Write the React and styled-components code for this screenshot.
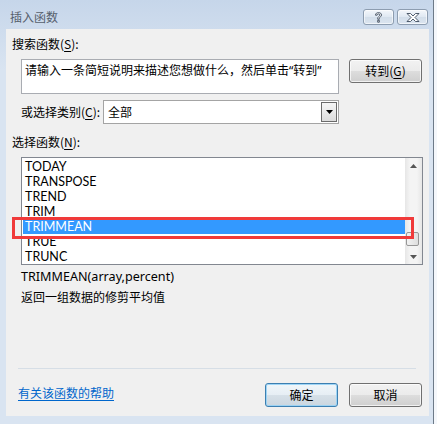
import React from "react";
import styled, { createGlobalStyle } from "styled-components";

const GlobalStyle = createGlobalStyle`
  html, body {
    margin: 0;
    padding: 0;
    background: #f4f7fb;
  }
  body {
    font-family: "Segoe UI", "Noto Sans", "Noto Sans CJK SC", sans-serif;
    font-size: 12px;
    color: #000;
  }
`;

const Frame = styled.div`
  width: 434px;
  height: 424px;
  border-right: 1px solid #6d7a88;
  background: linear-gradient(#c6d6ea, #d9e4f1 70px, #d9e4f1);
  display: flex;
  flex-direction: column;
  padding: 0 4px 8px 6px;
  box-sizing: border-box;
`;

const TitleBar = styled.div`
  height: 29px;
  display: flex;
  align-items: flex-start;
  justify-content: space-between;
`;

const Title = styled.div`
  margin: 9px 0 0 4px;
  line-height: 16px;
  color: #56606c;
  font-family: "Noto Sans CJK SC", sans-serif;
`;

const CaptionButtons = styled.div`
  display: flex;
  gap: 3px;
  margin-top: 9px;
  margin-right: 1px;
`;

const CaptionButton = styled.div`
  width: 29px;
  height: 14px;
  border: 1px solid #8d9db0;
  border-radius: 3px;
  background: linear-gradient(#f4f7fb, #dfe8f2 50%, #d3deea 51%, #dbe5f0);
  box-shadow: inset 0 0 0 1px rgba(255, 255, 255, 0.6);
  display: flex;
  align-items: center;
  justify-content: center;
`;

const Client = styled.div`
  flex: 1;
  background: #f0f0f0;
  display: flex;
  flex-direction: column;
  padding: 0 7px 9px 6px;
  font-family: "Noto Sans", "Noto Sans CJK SC", sans-serif;
`;

const Label = styled.div`
  line-height: 16px;
  margin-top: ${(p) => p.$top}px;
  white-space: nowrap;
  font-family: "Noto Sans CJK SC", sans-serif;

  u {
    text-decoration-thickness: 1px;
    text-underline-offset: 2px;
  }
`;

const Row = styled.div`
  display: flex;
  align-items: flex-start;
  margin-top: ${(p) => p.$top}px;
  margin-left: 9px;
  gap: ${(p) => p.$gap || 0}px;
`;

const SearchBox = styled.div`
  width: 318px;
  height: 35px;
  border: 1px solid #a9acb2;
  background: #fff;
  box-sizing: border-box;
  padding: 2px 0 0 3px;
  line-height: 16px;
  font-family: "Noto Sans CJK SC", sans-serif;
  white-space: nowrap;
`;

const Quote = styled.span`
  font-family: "Noto Sans", sans-serif;
`;

const PushButton = styled.div`
  width: 73px;
  height: 24px;
  box-sizing: border-box;
  border: 1px solid ${(p) => (p.$default ? "#3c7fb1" : "#707070")};
  border-radius: 3px;
  background: ${(p) =>
    p.$default
      ? "linear-gradient(#f0f6fa, #e6eef4 50%, #d6e0e8 51%, #cbd6df)"
      : "linear-gradient(#f2f2f2, #ebebeb 50%, #dddddd 51%, #cfcfcf)"};
  box-shadow: inset 0 0 0 1px
    ${(p) => (p.$default ? "rgba(150, 210, 245, 0.9)" : "rgba(255, 255, 255, 0.7)")};
  display: flex;
  align-items: center;
  justify-content: center;
  font-family: "Noto Sans CJK SC", sans-serif;
  line-height: 16px;
  margin-left: ${(p) => p.$left || 0}px;

  u {
    text-underline-offset: 2px;
  }
`;

const CategoryLabel = styled.div`
  width: 82px;
  line-height: 24px;
  font-family: "Noto Sans CJK SC", sans-serif;
  white-space: nowrap;

  u {
    text-underline-offset: 2px;
  }
`;

const Select = styled.div`
  width: 236px;
  height: 24px;
  box-sizing: border-box;
  border: 1px solid #a4a4a4;
  background: #fff;
  display: flex;
  align-items: stretch;
`;

const SelectValue = styled.div`
  flex: 1;
  padding-left: 4px;
  line-height: 22px;
  font-family: "Noto Sans CJK SC", sans-serif;
`;

const SelectArrow = styled.div`
  width: 16px;
  margin: 1px;
  box-sizing: border-box;
  border: 1px solid #6b6b6b;
  background: linear-gradient(#f6f6f6, #dcdcdc);
  display: flex;
  align-items: center;
  justify-content: center;
`;

const ListWrap = styled.div`
  position: relative;
  margin: 7px 0 0 9px;
  width: 402px;
  height: 108px;
`;

const ListBox = styled.div`
  width: 100%;
  height: 100%;
  box-sizing: border-box;
  border: 1px solid #828790;
  background: #fff;
  display: flex;
`;

const Items = styled.div`
  flex: 1;
  padding: 1px 0 0 1px;
  overflow: hidden;
`;

const Item = styled.div`
  height: 15px;
  line-height: 15px;
  padding-left: 2px;
  font-family: Lato, "Noto Sans", sans-serif;
  font-size: 12.5px;
  background: ${(p) => (p.$selected ? "#3399ff" : "transparent")};
  color: ${(p) => (p.$selected ? "#fff" : "#000")};
  white-space: nowrap;
`;

const ScrollBar = styled.div`
  width: 17px;
  background: linear-gradient(90deg, #e6e6e6, #f4f4f4 30%, #f4f4f4 70%, #e6e6e6);
  display: flex;
  flex-direction: column;
  align-items: center;
  justify-content: space-between;
  padding: 6px 0 5px;
  box-sizing: border-box;
`;

const Thumb = styled.div`
  width: 13px;
  height: 14px;
  margin-left: -2px;
  box-sizing: border-box;
  border: 1px solid #979797;
  border-radius: 2px;
  background: linear-gradient(90deg, #f2f2f2, #dedede);
  margin-top: auto;
  margin-bottom: 9px;
`;

const Highlight = styled.div`
  position: absolute;
  left: -9px;
  top: 60px;
  width: 402px;
  height: 22px;
  box-sizing: border-box;
  border: 3px solid #f03a3a;
  pointer-events: none;
`;

const Description = styled.div`
  margin: 2px 0 0 9px;
  line-height: 20px;

  p {
    margin: 0;
  }
  p:first-child {
    font-size: 12.6px;
  }
  p + p {
    font-family: "Noto Sans CJK SC", sans-serif;
  }
`;

const Separator = styled.div`
  margin: auto 6px 0 6px;
  height: 1px;
  background: #d6dee6;
`;

const Footer = styled.div`
  display: flex;
  align-items: center;
  margin-top: 14px;
  padding-left: 6px;
`;

const HelpLink = styled.a`
  color: #0066cc;
  text-decoration: underline;
  text-underline-offset: 2px;
  font-family: "Noto Sans CJK SC", sans-serif;
  line-height: 16px;
  margin-right: auto;
  margin-top: -4px;
  cursor: pointer;
`;

const functions = ["TODAY", "TRANSPOSE", "TREND", "TRIM", "TRIMMEAN", "TRUE", "TRUNC"];

const Tri = ({ up }) => (
  <svg width="7" height="4" viewBox="0 0 7 4">
    <polygon points={up ? "3.5,0 7,4 0,4" : "0,0 7,0 3.5,4"} fill="#555" />
  </svg>
);

export default function App() {
  return (
    <>
      <GlobalStyle />
      <Frame>
        <TitleBar>
          <Title>插入函数</Title>
          <CaptionButtons>
            <CaptionButton>
              <svg width="9" height="11" viewBox="0 0 9 11">
                <path
                  d="M1.5 3.2 C1.5 1.3 3 0.6 4.5 0.6 C6.3 0.6 7.5 1.6 7.5 3 C7.5 4.6 5.3 5 5.3 6.6 L5.3 7.2 L3.7 7.2 L3.7 6.3 C3.7 4.6 5.9 4.1 5.9 3 C5.9 2.3 5.3 1.9 4.5 1.9 C3.6 1.9 3.1 2.4 3.1 3.2 Z M3.7 8.3 H5.3 V10.2 H3.7 Z"
                  fill="#fff"
                  stroke="#3d4b5c"
                  strokeWidth="0.9"
                />
              </svg>
            </CaptionButton>
            <CaptionButton>
              <svg width="14" height="9" viewBox="0 0 14 9">
                <path
                  d="M1 0.5 H4.5 L7 3 L9.5 0.5 H13 L9 4.5 L13 8.5 H9.5 L7 6 L4.5 8.5 H1 L5 4.5 Z"
                  fill="#fff"
                  stroke="#3d4b5c"
                  strokeWidth="0.9"
                  strokeLinejoin="round"
                />
              </svg>
            </CaptionButton>
          </CaptionButtons>
        </TitleBar>
        <Client>
          <Label $top={7}>
            搜索函数(<u>S</u>):
          </Label>
          <Row $top={7} $gap={10}>
            <SearchBox>
              请输入一条简短说明来描述您想做什么，然后单击<Quote>“</Quote>转到<Quote>”</Quote>
            </SearchBox>
            <PushButton>
              转到(<u>G</u>)
            </PushButton>
          </Row>
          <Row $top={6}>
            <CategoryLabel>
              或选择类别(<u>C</u>):
            </CategoryLabel>
            <Select>
              <SelectValue>全部</SelectValue>
              <SelectArrow>
                <svg width="7" height="4" viewBox="0 0 7 4">
                  <polygon points="0,0 7,0 3.5,4" fill="#000" />
                </svg>
              </SelectArrow>
            </Select>
          </Row>
          <Label $top={10}>
            选择函数(<u>N</u>):
          </Label>
          <ListWrap>
            <ListBox>
              <Items>
                {functions.map((name) => (
                  <Item key={name} $selected={name === "TRIMMEAN"}>
                    {name}
                  </Item>
                ))}
              </Items>
              <ScrollBar>
                <Tri up />
                <Thumb />
                <Tri />
              </ScrollBar>
            </ListBox>
            <Highlight />
          </ListWrap>
          <Description>
            <p>TRIMMEAN(array,percent)</p>
            <p>返回一组数据的修剪平均值</p>
          </Description>
          <Separator />
          <Footer>
            <HelpLink>有关该函数的帮助</HelpLink>
            <PushButton $default>确定</PushButton>
            <PushButton $left={11}>取消</PushButton>
          </Footer>
        </Client>
      </Frame>
    </>
  );
}
